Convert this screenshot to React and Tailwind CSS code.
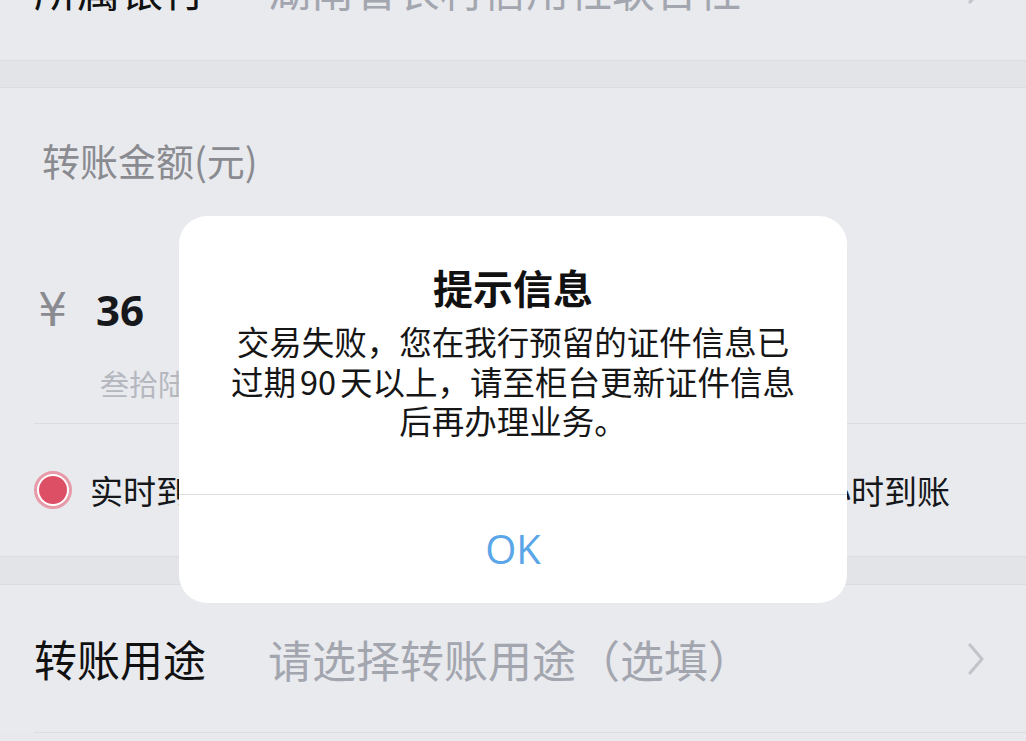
import React from "react";

const font = { fontFamily: '"Noto Sans CJK SC", "Noto Sans", sans-serif' };

function Chevron({ className }) {
  return (
    <svg viewBox="0 0 20 36" className={className} fill="none">
      <path d="M4 4 L16 18 L4 32" stroke="#c2c4ca" strokeWidth="3.2" strokeLinecap="round" strokeLinejoin="round" />
    </svg>
  );
}

function Radio() {
  return (
    <div className="h-[38px] w-[38px] rounded-full border-[3px] border-[#e79aa8] bg-white flex items-center justify-center">
      <div className="h-[28px] w-[28px] rounded-full bg-[#dc4f65]" />
    </div>
  );
}

export default function App() {
  return (
    <div className="relative h-[741px] w-[1026px] overflow-hidden bg-[#e8e9ed]" style={font}>
      {/* 所属银行 row, mostly scrolled off */}
      <div className="-mt-[84px] flex h-[144px] items-center bg-[#e9eaee] pl-[34px] pr-[40px]">
        <span className="w-[234px] text-[43px] leading-none text-[#111]">所属银行</span>
        <span className="flex-1 text-[43px] leading-none text-[#a3a6ae]">湖南省农村信用社联合社</span>
        <Chevron className="h-[36px] w-[20px]" />
      </div>

      <div className="h-[28px] border-y border-[#dcdde1] bg-[#e3e4e8]" />

      {/* amount section */}
      <div className="flex h-[468px] flex-col bg-[#e9eaee]">
        <div className="pl-[42px] pt-[53px] text-[38px] leading-none text-[#8a8b90]">转账金额(元)</div>
        <div className="mt-[108px] flex items-center pl-[38px]">
          <span className="w-[58px] text-[46px] leading-none text-[#8a8b90]" style={{ fontFamily: '"DejaVu Sans", sans-serif' }}>¥</span>
          <span className="text-[42px] font-bold leading-none text-[#16181c]" style={{ fontFamily: '"Open Sans", sans-serif' }}>36</span>
        </div>
        <div className="mt-[36px] pl-[100px] text-[29px] leading-none text-[#b5b8bf]">叁拾陆元整</div>
        <div className="ml-[34px] mt-[25px] border-t border-[#dcdde1]" />
        <div className="flex flex-1 items-center justify-between pl-[34px] pr-[76px]">
          <div className="flex items-center gap-[18px]">
            <Radio />
            <span className="text-[33px] leading-none text-[#15171a]">实时到账</span>
          </div>
          <div className="flex items-center gap-[18px]">
            <div className="h-[38px] w-[38px] rounded-full border-[3px] border-[#c7c9ce]" />
            <span className="text-[33px] leading-none text-[#15171a]">2小时到账</span>
          </div>
        </div>
      </div>

      <div className="h-[29px] border-y border-[#dcdde1] bg-[#e3e4e8]" />

      {/* purpose row */}
      <div className="bg-[#e9eaee] pl-[34px]">
        <div className="flex h-[148px] items-center border-b border-[#dcdde1] pr-[40px]">
          <span className="w-[234px] text-[43px] leading-none text-[#111]">转账用途</span>
          <span className="flex-1 text-[44px] leading-none text-[#a3a6ae]">请选择转账用途（选填）</span>
          <Chevron className="h-[36px] w-[20px]" />
        </div>
      </div>

      {/* alert */}
      <div className="absolute left-[179px] top-[216px] flex h-[387px] w-[668px] flex-col rounded-[28px] bg-white">
        <div className="pt-[47px] text-center text-[40px] font-bold leading-[48px] text-[#111]">提示信息</div>
        <div className="mt-[10px] text-center text-[32.5px] leading-[39.5px] text-[#161616]">
          交易失败，您在我行预留的证件信息已
          <br />
          过期<span className="px-[4px]">90</span>天以上，请至柜台更新证件信息
          <br />
          后再办理业务。
        </div>
        <div className="mt-auto flex h-[109px] items-center justify-center border-t border-[#dcdde1] text-[40px] leading-none text-[#5aa6e8]" style={{ fontFamily: '"Open Sans", sans-serif' }}>
          OK
        </div>
      </div>
    </div>
  );
}
